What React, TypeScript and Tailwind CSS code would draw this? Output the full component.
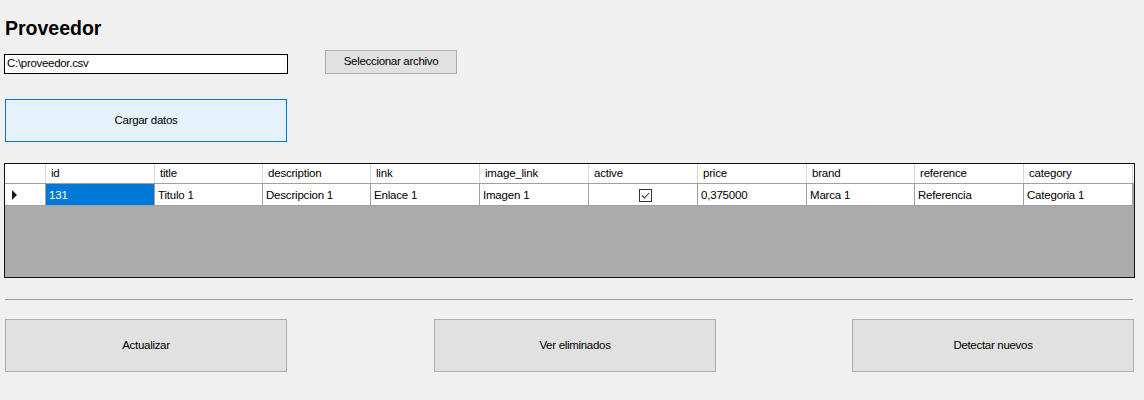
import React from "react";

const cols = [
  { name: "id", w: 109, val: "131" },
  { name: "title", w: 108, val: "Titulo 1" },
  { name: "description", w: 108, val: "Descripcion 1" },
  { name: "link", w: 109, val: "Enlace 1" },
  { name: "image_link", w: 109, val: "Imagen 1" },
  { name: "active", w: 109, val: "" },
  { name: "price", w: 109, val: "0,375000" },
  { name: "brand", w: 108, val: "Marca 1" },
  { name: "reference", w: 109, val: "Referencia" },
  { name: "category", w: 109, val: "Categoria 1" },
];

function WinButton({ label, className }: { label: string; className: string }) {
  return (
    <div
      className={`flex items-center justify-center border border-[#adadad] bg-[#e1e1e1] text-[11.5px] tracking-[-0.3px] text-black ${className}`}
    >
      {label}
    </div>
  );
}

export default function App() {
  return (
    <div
      className="w-[1144px] h-[400px] bg-[#f0f0f0] overflow-hidden text-black"
      style={{ fontFamily: '"Liberation Sans", Arial, sans-serif' }}
    >
      <div className="pt-[16px] pl-[5px] h-[50px]">
        <div className="text-[19.5px] leading-[24px] font-bold">Proveedor</div>
      </div>
      <div className="flex items-start h-[49px]">
        <div className="ml-[4px] mt-[4px] w-[284px] h-[20px] border border-black bg-white flex items-center pl-[2px] text-[11.5px] tracking-[-0.3px]">
          C:\proveedor.csv
        </div>
        <WinButton label="Seleccionar archivo" className="ml-[37px] w-[132px] h-[24px]" />
      </div>
      <div className="ml-[5px] w-[282px] h-[43px] border border-[#0078d7] bg-[#e5f1fb] flex items-center justify-center text-[11.5px] tracking-[-0.3px]">
        Cargar datos
      </div>
      <div className="mt-[21px] ml-[4px] w-[1131px] h-[115px] border border-[#111] bg-[#ababab] flex flex-col text-[11.5px] tracking-[-0.2px]">
        <div className="flex h-[20px] bg-white border-b border-[#a0a0a0]">
          <div className="w-[41px] shrink-0 border-r border-[#d8d8d8]" />
          {cols.map((c) => (
            <div
              key={c.name}
              style={{ width: c.w }}
              className="shrink-0 border-r border-[#d8d8d8] pl-[5px] pt-[1px] flex items-center"
            >
              {c.name}
            </div>
          ))}
          <div className="flex-1" />
        </div>
        <div className="flex h-[22px]">
          <div className="w-[41px] shrink-0 bg-white border-r border-b border-[#a0a0a0] flex items-center pl-[7px]">
            <svg width="6" height="10" viewBox="0 0 6 10">
              <polygon points="0,0 5,5 0,10" fill="#1a1a1a" />
            </svg>
          </div>
          {cols.map((c, i) => (
            <div
              key={c.name}
              style={{ width: c.w }}
              className={`shrink-0 border-r border-b border-[#a0a0a0] flex items-center pt-[2px] ${
                i === 0 ? "bg-[#0078d7] text-white pl-[3px]" : "bg-white pl-[3px]"
              } ${c.name === "active" ? "justify-center pl-0 pt-0" : ""}`}
            >
              {c.name === "active" ? (
                <svg width="13" height="13" viewBox="0 0 13 13" className="ml-[2px]">
                  <rect x="0.5" y="0.5" width="12" height="12" fill="white" stroke="#333" />
                  <polyline points="3,6.5 5.5,9 10,4" fill="none" stroke="#333" strokeWidth="1.1" />
                </svg>
              ) : (
                c.val
              )}
            </div>
          ))}
        </div>
      </div>
      <div className="mt-[21px] ml-[5px] w-[1128px] h-px bg-[#a0a0a0]" />
      <div className="mt-[19px] flex">
        <WinButton label="Actualizar" className="ml-[5px] w-[282px] h-[53px]" />
        <WinButton label="Ver eliminados" className="ml-[147px] w-[282px] h-[53px]" />
        <WinButton label="Detectar nuevos" className="ml-[136px] w-[282px] h-[53px]" />
      </div>
    </div>
  );
}
